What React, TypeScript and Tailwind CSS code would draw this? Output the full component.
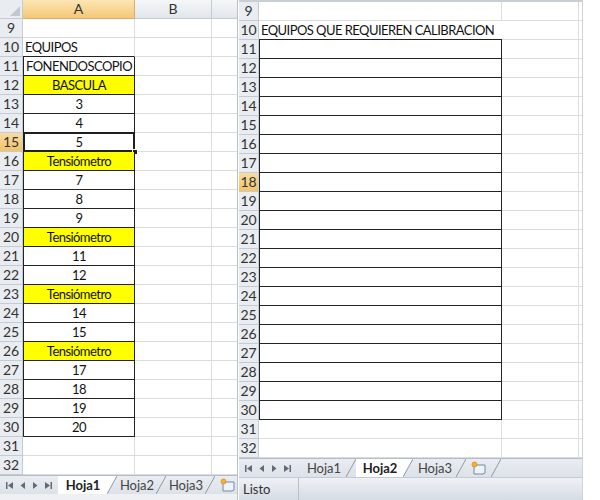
import React from "react";

const FONT = "font-['Lato','Open_Sans',sans-serif]";
const ROWS = Array.from({ length: 24 }, (_, i) => i + 9);

type Cell = { text: string; yellow?: boolean };

const LEFT: Record<number, Cell> = {
  11: { text: "FONENDOSCOPIO" },
  12: { text: "BASCULA", yellow: true },
  13: { text: "3" },
  14: { text: "4" },
  15: { text: "5" },
  16: { text: "Tensiómetro", yellow: true },
  17: { text: "7" },
  18: { text: "8" },
  19: { text: "9" },
  20: { text: "Tensiómetro", yellow: true },
  21: { text: "11" },
  22: { text: "12" },
  23: { text: "Tensiómetro", yellow: true },
  24: { text: "14" },
  25: { text: "15" },
  26: { text: "Tensiómetro", yellow: true },
  27: { text: "17" },
  28: { text: "18" },
  29: { text: "19" },
  30: { text: "20" },
};

function RowHeader({ n, active, w }: { n: number; active?: boolean; w: string }) {
  return (
    <div
      className={`${w} h-full shrink-0 flex items-center justify-center border-r border-b border-[#c5cbd3] text-[14px] text-[#333] ${
        active ? "bg-gradient-to-b from-[#f9dca2] to-[#f2c366]" : "bg-[#e9ecf0]"
      }`}
    >
      {n}
    </div>
  );
}

function NavArrows() {
  const c = "#5f6b78";
  return (
    <div className="w-[58px] shrink-0 flex items-center justify-around px-[2px]">
      <svg width="9" height="9" viewBox="0 0 9 9">
        <rect x="1" y="1" width="1.5" height="7" fill={c} />
        <polygon points="8,1 3,4.5 8,8" fill={c} />
      </svg>
      <svg width="7" height="9" viewBox="0 0 7 9">
        <polygon points="6,1 1.5,4.5 6,8" fill={c} />
      </svg>
      <svg width="7" height="9" viewBox="0 0 7 9">
        <polygon points="1,1 5.5,4.5 1,8" fill={c} />
      </svg>
      <svg width="9" height="9" viewBox="0 0 9 9">
        <polygon points="1,1 6,4.5 1,8" fill={c} />
        <rect x="6.5" y="1" width="1.5" height="7" fill={c} />
      </svg>
    </div>
  );
}

function Slant({ fill }: { fill?: string }) {
  return (
    <svg width="10" height="19" viewBox="0 0 10 19" className="shrink-0 -ml-[1px]">
      {fill && <polygon points="0,0 10,0 0,18" fill={fill} />}
      <line x1="0" y1="18" x2="10" y2="0" stroke="#8d99a7" strokeWidth="1" />
    </svg>
  );
}

function Tab({ label, active, w }: { label: string; active?: boolean; w: string }) {
  return (
    <div className="flex h-full">
      <div
        className={`${w} h-full flex items-center justify-center ${
          active ? "bg-white font-bold text-[#222]" : "text-[#444]"
        }`}
      >
        {label}
      </div>
      <Slant fill={active ? "#ffffff" : undefined} />
    </div>
  );
}

function NewSheetIcon() {
  return (
    <div className="flex h-full">
      <div className="w-[26px] h-full flex items-center justify-center">
        <svg width="18" height="14" viewBox="0 0 18 14">
          <path d="M4 4 L15 4 L15 12 L13 13 L4 13 Z" fill="#eef3fa" stroke="#6f8aa8" strokeWidth="1" />
          <circle cx="4.5" cy="3.5" r="2.5" fill="#f5b335" stroke="#d98b13" strokeWidth="0.8" />
        </svg>
      </div>
      <Slant />
    </div>
  );
}

function LeftPanel() {
  return (
    <div className="w-[238px] h-full shrink-0 flex flex-col bg-white border-r border-[#b9c0c9]">
      {/* column headers */}
      <div className="h-[19px] flex shrink-0 text-[14px] text-[#333]">
        <div className="w-[23px] h-full shrink-0 relative bg-[#e9ecf0] border-r border-b border-[#c5cbd3]">
          <svg width="10" height="10" viewBox="0 0 10 10" className="absolute right-[2px] bottom-[2px]">
            <polygon points="10,0 10,10 0,10" fill="#c3c9d1" />
          </svg>
        </div>
        <div className="w-[112px] h-full shrink-0 flex items-center justify-center bg-gradient-to-b from-[#fce6b4] to-[#f4c775] border-r border-b border-[#d8b06a]">
          A
        </div>
        <div className="w-[77px] h-full shrink-0 flex items-center justify-center bg-gradient-to-b from-[#f5f7f9] to-[#e2e6eb] border-r border-b border-[#c5cbd3]">
          B
        </div>
        <div className="flex-1 h-full bg-gradient-to-b from-[#f5f7f9] to-[#e2e6eb] border-b border-[#c5cbd3]" />
      </div>
      {ROWS.map((n) => {
        const cell = LEFT[n];
        const bordered = !!cell;
        return (
          <div key={n} className="h-[19px] flex shrink-0">
            <RowHeader n={n} active={n === 15} w="w-[23px]" />
            <div
              className={`w-[112px] h-full shrink-0 relative flex items-center text-[#111] tracking-[-0.55px] whitespace-nowrap ${
                bordered
                  ? "justify-center border-l border-r border-b border-[#222]"
                  : n === 10
                  ? "pl-[2px] border-r border-b border-[#222] border-r-[#dadcdd]"
                  : "border-r border-b border-[#dadcdd]"
              } ${cell?.yellow ? "bg-[#ffff00]" : ""}`}
            >
              {n === 10 ? "EQUIPOS" : cell?.text}
              {n === 15 && (
                <>
                  <div className="absolute -left-[1px] -top-[1px] -right-[1px] -bottom-[1px] border-2 border-[#1f1f1f] pointer-events-none" />
                  <div className="absolute -right-[4px] -bottom-[4px] w-[6px] h-[6px] bg-[#1f1f1f] border border-white" />
                </>
              )}
            </div>
            <div className="w-[77px] h-full shrink-0 border-r border-b border-[#dadcdd]" />
            <div className="flex-1 h-full border-b border-[#dadcdd]" />
          </div>
        );
      })}
      <div className="h-[19px] shrink-0 flex bg-gradient-to-b from-[#e9edf2] to-[#dde2e8] border-t border-[#b3bcc7] text-[#444]">
        <NavArrows />
        <Tab label="Hoja1" active w="w-[50px]" />
        <Tab label="Hoja2" w="w-[40px]" />
        <Tab label="Hoja3" w="w-[40px]" />
        <NewSheetIcon />
      </div>
      <div className="flex-1 bg-[#eef0f3]" />
    </div>
  );
}

function RightPanel() {
  return (
    <div className="w-[344px] h-full shrink-0 flex flex-col bg-white ml-[1px] border-r border-[#d0d4d9]">
      <div className="h-[2px] shrink-0 bg-[#c9ced5]" />
      {ROWS.map((n) => {
        const bordered = n >= 11 && n <= 30;
        return (
          <div key={n} className="h-[19px] flex shrink-0">
            <RowHeader n={n} active={n === 18} w="w-[20px]" />
            <div
              className={`w-[243px] h-full shrink-0 flex items-center text-[#111] tracking-[-0.55px] whitespace-nowrap ${
                bordered
                  ? "border-l border-r border-b border-[#222]"
                  : n === 10
                  ? "pl-[2px] border-b border-[#222]"
                  : "border-r border-b border-[#dadcdd]"
              }`}
            >
              {n === 10 ? "EQUIPOS QUE REQUIEREN CALIBRACION" : ""}
            </div>
            <div className="w-[77px] h-full shrink-0 border-r border-b border-[#dadcdd]" />
            <div className="flex-1 h-full border-b border-[#dadcdd]" />
          </div>
        );
      })}
      <div className="h-[19px] shrink-0 flex bg-gradient-to-b from-[#e9edf2] to-[#dde2e8] border-t border-[#b3bcc7] text-[#444]">
        <NavArrows />
        <div className="w-[4px]" />
        <Tab label="Hoja1" w="w-[46px]" />
        <Tab label="Hoja2" active w="w-[48px]" />
        <Tab label="Hoja3" w="w-[44px]" />
        <NewSheetIcon />
      </div>
      <div className="flex-1 flex bg-gradient-to-b from-[#eef1f5] to-[#d6dce4] border-t border-[#c3cad3] text-[#333]">
        <div className="w-[60px] h-full flex items-center pl-[4px] border-r border-[#b7bfca]">Listo</div>
      </div>
    </div>
  );
}

export default function App() {
  return (
    <div className={`w-[600px] h-[500px] flex bg-white overflow-hidden text-[13px] leading-none ${FONT}`}>
      <LeftPanel />
      <RightPanel />
    </div>
  );
}
